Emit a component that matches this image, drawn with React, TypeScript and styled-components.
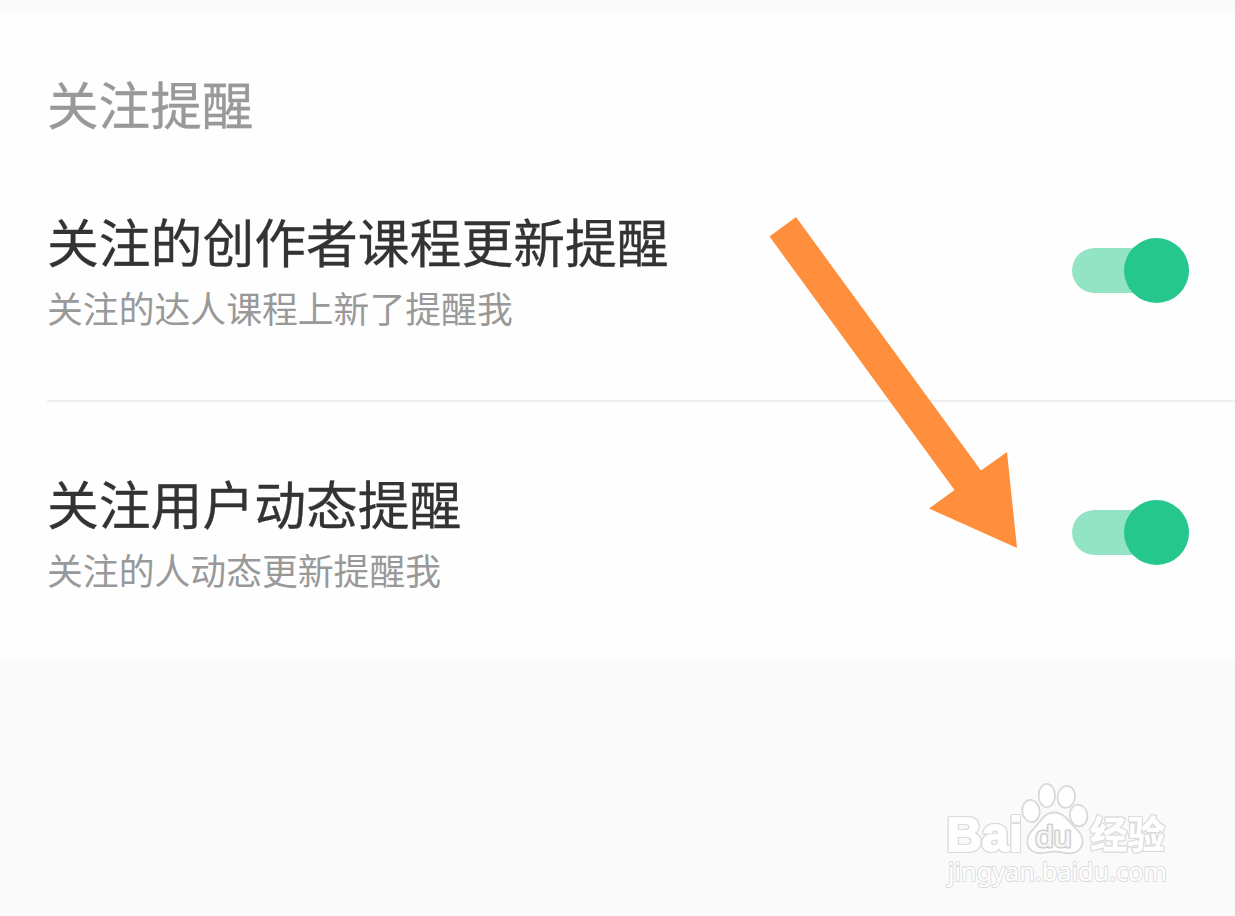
import { useState } from "react";
import styled, { createGlobalStyle } from "styled-components";

const GlobalStyle = createGlobalStyle`
  * {
    box-sizing: border-box;
  }
  body {
    margin: 0;
    background-color: #fafafa;
    font-family: "Noto Sans CJK SC", sans-serif;
  }
`;

const Wrapper = styled.div`
  position: relative;
  width: 1235px;
  height: 916px;
  padding-top: 11px;
  overflow: hidden;
  background-color: #fafafa;
`;

const Card = styled.section`
  height: 650px;
  padding-left: 47px;
  background-color: #fefefe;
`;

const Heading = styled.h2`
  height: 129px;
  margin: 0;
  padding-top: 59px;
  color: #999999;
  font-size: 51.6px;
  font-weight: 400;
  line-height: 66px;
  -webkit-text-stroke: 0.3px #999999;
`;

const Row = styled.div<{ $last?: boolean }>`
  display: flex;
  justify-content: space-between;
  height: ${(props) => (props.$last ? "259px" : "262px")};
  padding-right: 46px;
  border-bottom: ${(props) => (props.$last ? "none" : "2px solid #efefef")};
`;

const Copy = styled.div`
  padding-top: 67px;
  white-space: nowrap;
`;

const Title = styled.h3`
  margin: 0;
  color: #333333;
  font-size: 51.8px;
  font-weight: 400;
  line-height: 67px;
  -webkit-text-stroke: 0.3px #333333;
`;

const Desc = styled.p`
  margin: 0;
  color: #999999;
  font-size: 35.85px;
  line-height: 66px;
`;

const Switch = styled.button<{ $on: boolean }>`
  display: flex;
  align-items: center;
  justify-content: ${(props) => (props.$on ? "flex-end" : "flex-start")};
  width: 117px;
  height: 45px;
  margin-top: 108px;
  padding: 0;
  border: none;
  border-radius: 23px;
  background-color: ${(props) => (props.$on ? "#93e4c5" : "#dddddd")};
`;

const Knob = styled.span<{ $on: boolean }>`
  flex: none;
  width: 65px;
  height: 65px;
  border-radius: 50%;
  background-color: ${(props) => (props.$on ? "#26c78c" : "#ffffff")};
`;

const Arrow = styled.svg`
  position: absolute;
  top: 210px;
  left: 760px;
`;

const Watermark = styled.svg`
  position: absolute;
  top: 770px;
  left: 930px;
`;

// white lettering with a thin grey rim on every side
const Brand = styled.text`
  fill: #ffffff;
  stroke: #ffffff;
  font-weight: 700;
  filter: drop-shadow(1px 0 0.3px #dcdcdc) drop-shadow(-1px 0 0.3px #dcdcdc)
    drop-shadow(0 1px 0.3px #dcdcdc) drop-shadow(0 -1px 0.3px #dcdcdc);
`;

const items = [
  {
    title: "关注的创作者课程更新提醒",
    desc: "关注的达人课程上新了提醒我",
  },
  {
    title: "关注用户动态提醒",
    desc: "关注的人动态更新提醒我",
  },
];

function SettingRow({ title, desc, last }: { title: string; desc: string; last: boolean }) {
  const [on, setOn] = useState(true);
  return (
    <Row $last={last}>
      <Copy>
        <Title>{title}</Title>
        <Desc>{desc}</Desc>
      </Copy>
      <Switch $on={on} onClick={() => setOn(!on)} aria-label={title}>
        <Knob $on={on} />
      </Switch>
    </Row>
  );
}

function Logo() {
  return (
    <Watermark width="260" height="130" viewBox="0 0 260 130">
      <Brand x="16.500" y="81" fontFamily="Liberation Sans" fontSize="49" strokeWidth="1.8" textLength="76" lengthAdjust="spacingAndGlyphs">
        Bai
      </Brand>
      <Brand x="160" y="78" fontFamily="Noto Sans CJK SC" fontSize="37.500" strokeWidth="0.4" textLength="75" lengthAdjust="spacingAndGlyphs">
        经验
      </Brand>
      <g fill="#ffffff" stroke="#d9d9d9" strokeWidth="1.8">
        <ellipse cx="101" cy="41" rx="8.7" ry="11.2" transform="rotate(-8 101 41)" />
        <ellipse cx="116.8" cy="25.5" rx="8.2" ry="11.6" />
        <ellipse cx="136.3" cy="26.9" rx="8.7" ry="11" transform="rotate(10 136.3 26.9)" />
        <ellipse cx="148.6" cy="45.5" rx="8.8" ry="10.8" transform="rotate(-8 148.6 45.5)" />
        <path d="M124 42.5C115 42.5 112.500 49 107.500 54.500C102 60.500 97.300 64.500 97.300 71C97.300 79 103 83.200 111 83C116 82.900 119 81.500 125 81.500C131 81.500 134 83.500 140 83.300C148 83 152.700 78 152.700 71C152.700 64 147 60 141.500 54C136.500 48.500 133 42.500 124 42.500Z" />
      </g>
      <g paintOrder="stroke" strokeLinejoin="round">
        <text x="105.500" y="77" fontFamily="Liberation Sans" fontSize="29" fill="#f8f8f8" stroke="#d0d0d0" strokeWidth="3" textLength="36" lengthAdjust="spacingAndGlyphs">
          du
        </text>
        <text x="18" y="111" fontFamily="Noto Sans" fontSize="26" fill="#ffffff" stroke="#dcdcdc" strokeWidth="2" textLength="219" lengthAdjust="spacingAndGlyphs">
          jingyan.baidu.com
        </text>
      </g>
    </Watermark>
  );
}

export default function App() {
  return (
    <>
      <GlobalStyle />
      <Wrapper>
        <Card>
          <Heading>关注提醒</Heading>
          {items.map((item, index) => (
            <SettingRow key={item.title} {...item} last={index === items.length - 1} />
          ))}
        </Card>
        <Arrow width="270" height="345" viewBox="760 210 270 345">
          <polygon fill="#ff8f3c" points="769.5,236.500 796,217 981,470.500 1007,452 1017,548 929,508.500 954.500,490" />
        </Arrow>
        <Logo />
      </Wrapper>
    </>
  );
}
